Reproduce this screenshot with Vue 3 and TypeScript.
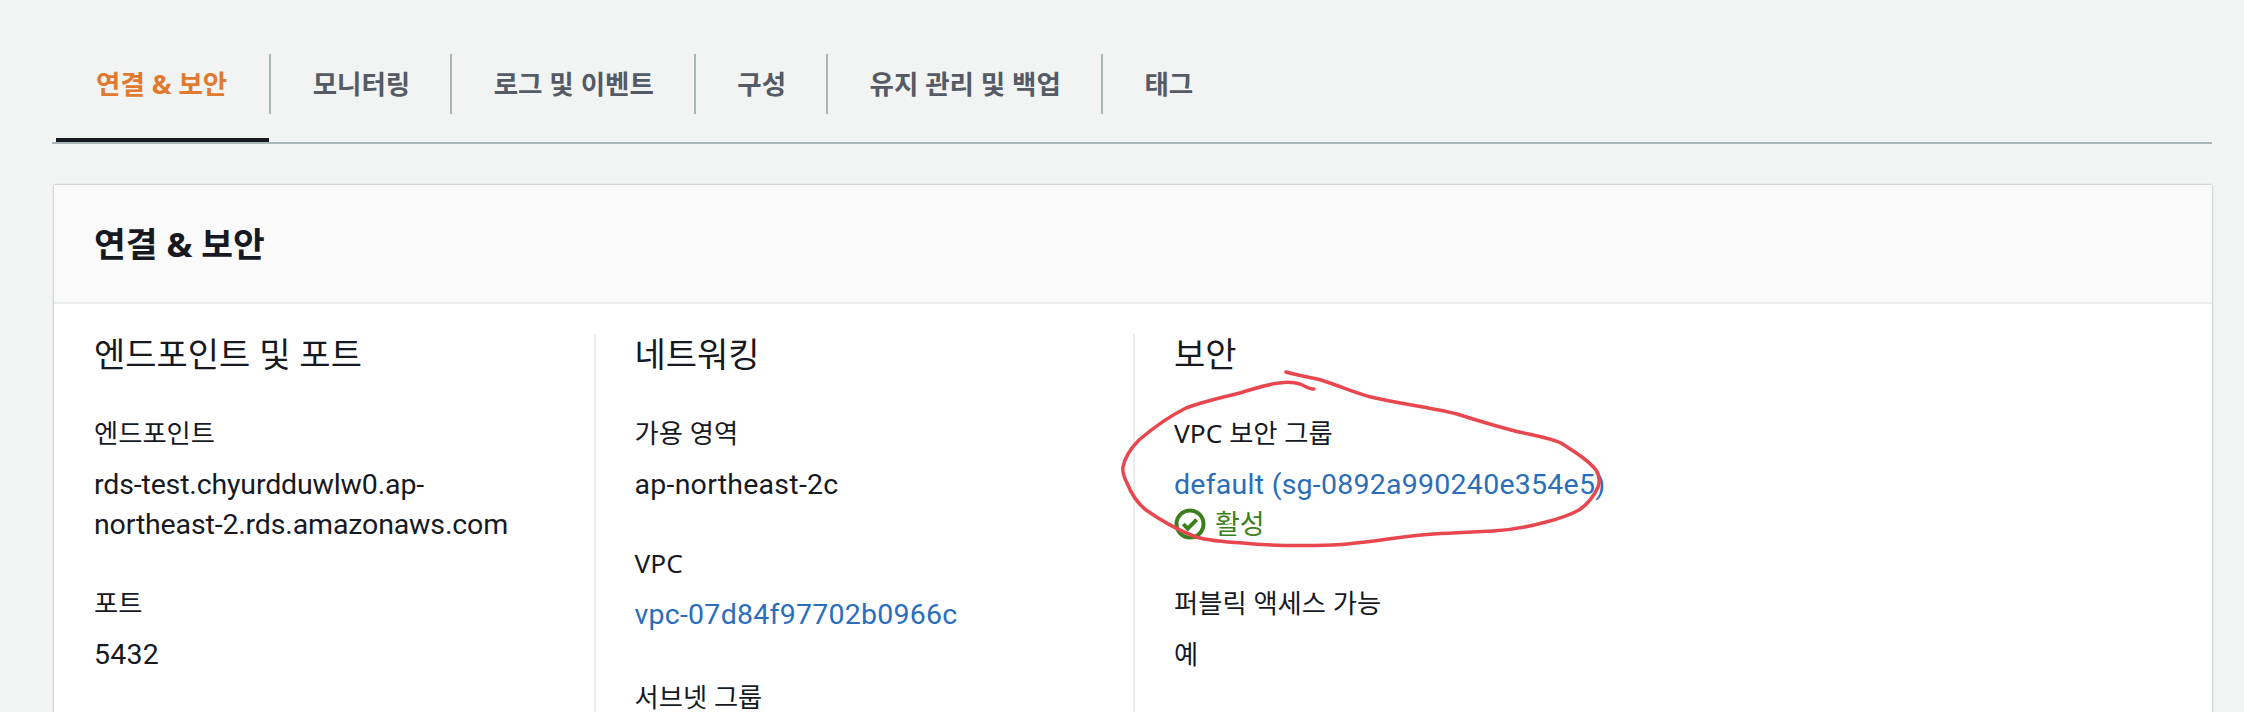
<script setup lang="ts">
interface Tab {
  name: string;
  active?: boolean;
}

const tabs: Tab[] = [
  { name: "연결 & 보안", active: true },
  { name: "모니터링" },
  { name: "로그 및 이벤트" },
  { name: "구성" },
  { name: "유지 관리 및 백업" },
  { name: "태그" },
];

const scribble =
  "M1286 372 C1300 376 1310 377 1321 380 C1340 386 1355 393 1371 397 C1400 404 1430 407 1457 414 C1476 420 1492 425 1511 430 C1530 435 1548 437 1561 443 C1575 452 1588 460 1596 470 C1600 476 1600 481 1598 487 C1594 496 1588 504 1579 510 C1568 516 1558 519 1546 522 C1528 527 1510 530 1493 531 C1470 532 1445 533 1421 535 C1390 538 1360 544 1332 545 C1300 546 1270 546 1243 543 C1225 542 1210 541 1196 537 C1178 530 1160 520 1146 510 C1137 503 1131 493 1127 483 C1124 477 1122 472 1123 467 C1125 457 1131 448 1139 440 C1153 428 1170 416 1186 408 C1205 401 1225 397 1243 392 C1257 388 1268 384 1279 383 C1287 382 1294 382 1300 384 C1305 386 1309 389 1314 389";
</script>

<template>
  <div class="page">
    <div class="tabs">
      <div v-for="tab in tabs" :key="tab.name" class="tab" :class="{ active: tab.active }">
        <span class="tab-label">{{ tab.name }}</span>
      </div>
    </div>

    <div class="card">
      <h2 class="card-title">연결 &amp; 보안</h2>
      <div class="columns">
        <section class="column">
          <h3>엔드포인트 및 포트</h3>
          <div class="field">
            <div class="label">엔드포인트</div>
            <div class="value long">rds-test.chyurdduwlw0.ap-<br />northeast-2.rds.amazonaws.com</div>
          </div>
          <div class="field">
            <div class="label">포트</div>
            <div class="value">5432</div>
          </div>
        </section>
        <section class="column">
          <h3>네트워킹</h3>
          <div class="field">
            <div class="label">가용 영역</div>
            <div class="value">ap-northeast-2c</div>
          </div>
          <div class="field">
            <div class="label">VPC</div>
            <a class="value link">vpc-07d84f97702b0966c</a>
          </div>
          <div class="field">
            <div class="label last">서브넷 그룹</div>
          </div>
        </section>
        <section class="column">
          <h3>보안</h3>
          <div class="field">
            <div class="label">VPC 보안 그룹</div>
            <a class="value link">default (sg-0892a990240e354e5)</a>
            <div class="status">
              <svg width="32" height="32" viewBox="0 0 32 32" fill="none">
                <circle cx="16" cy="16" r="13.5" stroke="#3d7f1e" stroke-width="4" />
                <path d="M9.3 16 L13.7 20.7 L22.7 11.7" stroke="#3d7f1e" stroke-width="4" />
              </svg>
              <span>활성</span>
            </div>
          </div>
          <div class="field">
            <div class="label">퍼블릭 액세스 가능</div>
            <div class="value ko">예</div>
          </div>
        </section>
      </div>
    </div>

    <svg class="scribble" width="2244" height="712" viewBox="0 0 2244 712" fill="none">
      <path :d="scribble" stroke="#e8474f" stroke-width="3.5" stroke-linecap="round" />
    </svg>
  </div>
</template>

<style scoped>
.page {
  position: relative;
  width: 2244px;
  height: 712px;
  overflow: hidden;
  box-sizing: border-box;
  padding: 54px 32px 0 52px;
  background: #f2f3f3;
  color: #16191f;
  font-family: "Noto Sans", "Noto Sans CJK KR", sans-serif;
}

.tabs {
  display: flex;
  height: 88px;
  border-bottom: 2px solid #aab7b8;
}

.tab {
  position: relative;
  height: 60px;
  box-sizing: border-box;
  padding: 0 40px 4px 41.5px;
  display: flex;
  align-items: center;
  border-right: 2px solid #aab7b8;
  color: #545b64;
  font-size: 26.5px;
  font-weight: 700;
}

.tab:first-child {
  margin-left: 4px;
  padding: 0 42px 4px 40px;
}

.tab:last-child {
  border-right: none;
}

.tab.active {
  color: #e07a2f;
}

.tab.active::after {
  content: "";
  position: absolute;
  left: 0;
  right: 0;
  top: 84px;
  height: 4px;
  background: #16191f;
}

.card {
  margin: 41px 0 0 2px;
  height: 600px;
  background: #fff;
  box-shadow: 0 0 2px rgba(0, 28, 36, 0.4);
}

.card-title {
  margin: 0;
  height: 119px;
  box-sizing: border-box;
  padding: 0 40px 4px;
  display: flex;
  align-items: center;
  font-size: 34.5px;
  font-weight: 700;
  background: #fafafa;
  border-bottom: 2px solid #eaeded;
}

.columns {
  display: grid;
  grid-template-columns: repeat(4, 1fr);
  padding-top: 30px;
}

.column {
  box-sizing: border-box;
  height: 500px;
  padding-left: 39px;
  border-left: 2px solid #eaeded;
}

.column:first-child {
  border-left: none;
  padding-left: 40px;
}

h3 {
  margin: 0 0 41px;
  padding-top: 2px;
  height: 36px;
  line-height: 36px;
  font-size: 34px;
  font-weight: 400;
}

.field {
  margin-bottom: 38px;
}

.label {
  font-size: 26.3px;
  line-height: 40px;
  margin-bottom: 12px;
}

.label.last {
  padding-top: 6px;
  line-height: 28px;
  margin-bottom: 0;
}

.value {
  display: block;
  font-family: Roboto, "Noto Sans CJK KR", sans-serif;
  font-size: 28.5px;
  line-height: 40px;
  letter-spacing: 0.25px;
}

.value.long {
  letter-spacing: -0.15px;
}

.value.ko {
  font-family: "Noto Sans CJK KR", sans-serif;
  font-size: 26.3px;
  line-height: 36px;
}

.link {
  color: #2a6ebb;
}

a.value:last-child {
  padding-bottom: 4px;
}

.status {
  display: flex;
  align-items: center;
  gap: 9px;
  padding-bottom: 2px;
  font-size: 27px;
  line-height: 38px;
  color: #3d7f1e;
}

.scribble {
  position: absolute;
  left: 0;
  top: 0;
  pointer-events: none;
}
</style>
